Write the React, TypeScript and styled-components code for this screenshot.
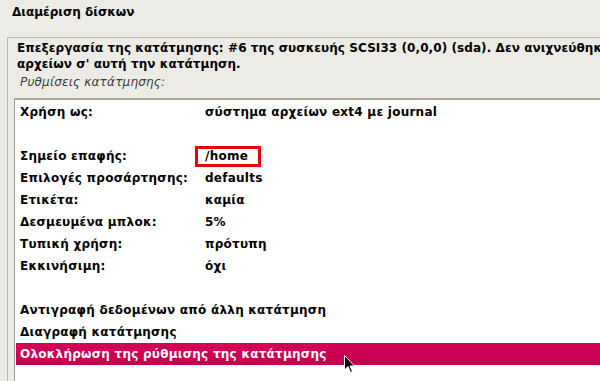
import styled, { createGlobalStyle } from 'styled-components';

const GlobalStyle = createGlobalStyle`
  html, body {
    margin: 0;
    padding: 0;
    background: #edebe6;
    overflow: hidden;
  }
  body {
    font-family: 'DejaVu Sans', 'Liberation Sans', sans-serif;
    font-size: 12px;
    color: #000;
  }
`;

const rows: { label: string; value?: string; boxed?: boolean }[] = [
  { label: 'Χρήση ως:', value: 'σύστημα αρχείων ext4 με journal' },
  { label: '' },
  { label: 'Σημείο επαφής:', value: '/home', boxed: true },
  { label: 'Επιλογές προσάρτησης:', value: 'defaults' },
  { label: 'Ετικέτα:', value: 'καμία' },
  { label: 'Δεσμευμένα μπλοκ:', value: '5%' },
  { label: 'Τυπική χρήση:', value: 'πρότυπη' },
  { label: 'Εκκινήσιμη:', value: 'όχι' },
  { label: '' },
  { label: 'Αντιγραφή δεδομένων από άλλη κατάτμηση' },
  { label: 'Διαγραφή κατάτμησης' },
];

function App() {
  return (
    <>
      <GlobalStyle />
      <Page>
        <Title>Διαμέριση δίσκων</Title>
        <Frame>
          <Heading>
            Επεξεργασία της κατάτμησης: #6 της συσκευής SCSI33 (0,0,0) (sda). Δεν ανιχνεύθηκε
            κάποιο σύστημα
            <br />
            αρχείων σ' αυτή την κατάτμηση.
          </Heading>
          <Caption>Ρυθμίσεις κατάτμησης:</Caption>
          <ListBox>
            {rows.map((r, i) => (
              <Row key={i}>
                <Label>{r.label}</Label>
                {r.value && <Value $boxed={r.boxed}>{r.value}</Value>}
              </Row>
            ))}
            <Row $selected>
              <Label>Ολοκλήρωση της ρύθμισης της κατάτμησης</Label>
              <Cursor viewBox="0 0 12 19" width="12" height="19">
                <path
                  d="M0.5 0.5 L0.5 15 L4 11.5 L6.5 17.5 L8.5 16.5 L6 11 L10.5 11 Z"
                  fill="#000"
                  stroke="#fff"
                  strokeWidth="1"
                />
              </Cursor>
            </Row>
          </ListBox>
        </Frame>
      </Page>
    </>
  );
}

const Page = styled.div`
  width: 600px;
  height: 381px;
  display: flex;
  flex-direction: column;
  overflow: hidden;
`;

const Title = styled.div`
  font-weight: bold;
  padding: 5px 0 0 12px;
  height: 37px;
  box-sizing: border-box;
`;

const Frame = styled.div`
  flex: 1;
  margin-left: 7px;
  border-top: 1px solid #bfb8ad;
  border-left: 1px solid #bfb8ad;
  display: flex;
  flex-direction: column;
  min-height: 0;
`;

const Heading = styled.div`
  font-weight: bold;
  letter-spacing: 0.08px;
  padding: 2px 0 0 9px;
  line-height: 16px;
  white-space: nowrap;
`;

const Caption = styled.div`
  font-style: italic;
  color: #3c3c3c;
  letter-spacing: 0.2px;
  padding: 3px 0 0 12px;
  height: 26px;
  box-sizing: border-box;
`;

const ListBox = styled.div`
  flex: 1;
  margin-left: 6px;
  background: #fff;
  border-top: 2px solid #b3a898;
  border-left: 1px solid #a49a8b;
  padding: 0 0 0 1px;
  display: flex;
  flex-direction: column;
`;

const Row = styled.div<{ $selected?: boolean }>`
  position: relative;
  display: flex;
  align-items: center;
  height: 22px;
  padding-left: 4px;
  font-weight: bold;
  letter-spacing: 0.25px;
  flex-shrink: 0;
  color: ${(p) => (p.$selected ? '#fff' : '#000')};
  background: ${(p) =>
    p.$selected ? 'linear-gradient(to bottom, #d6005a, #c2004c)' : 'transparent'};
  &:first-child {
    margin-top: 1px;
  }
`;

const Label = styled.span`
  width: 185px;
  white-space: nowrap;
`;

const Value = styled.span<{ $boxed?: boolean }>`
  white-space: nowrap;
  padding: 0 10px 0 7px;
  margin-left: -10px;
  line-height: 15px;
  border: 3px solid ${(p) => (p.$boxed ? '#e8000b' : 'transparent')};
`;

const Cursor = styled.svg`
  position: absolute;
  left: 328px;
  top: 12px;
`;

export default App;
